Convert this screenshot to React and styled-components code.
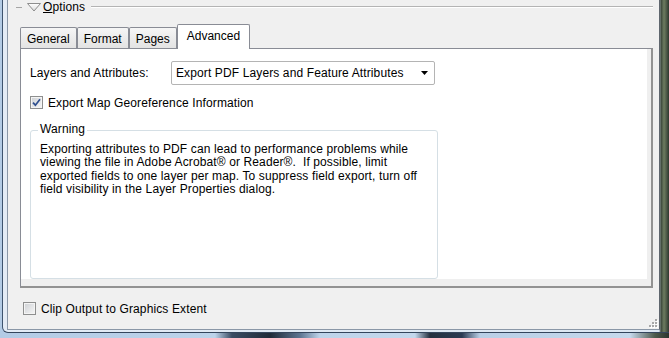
import React from 'react'
import styled, { createGlobalStyle } from 'styled-components'

const GlobalStyle = createGlobalStyle`
  html, body {
    margin: 0;
    padding: 0;
  }
  body {
    background: #b9d0e8;
    font-family: "Liberation Sans", Arial, sans-serif;
    font-size: 12px;
    letter-spacing: 0.12px;
    color: #000;
  }
`

// desktop glass seen around the dialog frame
const Screen = styled.div`
  width: 669px;
  height: 338px;
  overflow: hidden;
  box-sizing: border-box;
  padding-left: 2px;
  background: linear-gradient(90deg,
    #b3cbe5 0, #bcd3ea 215px, #3a4c63 232px, #1f2a38 270px, #5d7591 300px,
    #bed4ea 320px, #c3d7ec 415px, #24303f 430px, #2a3a52 462px, #b9cfe6 480px,
    #c6d9ec 630px, #4c5a4c 655px, #2b352e 669px);
`

const Window = styled.div`
  width: 667px;
  height: 333px;
  box-sizing: border-box;
  display: flex;
  padding: 0 9px 2px 4px;
  border-left: 1px solid #3d536e;
  border-bottom: 1px solid #34465d;
  border-bottom-left-radius: 6px;
  background: linear-gradient(90deg,
    #e3ebf5 0, #dce7f2 calc(100% - 10px), #3b473b calc(100% - 8px),
    #6d7c60 calc(100% - 5px), #2e382f 100%);
`

const Client = styled.div`
  position: relative;
  flex: 1;
  display: flex;
  flex-direction: column;
  box-sizing: border-box;
  background: #f0f0f0;
  border-left: 1px solid #8a97a7;
  border-right: 1px solid #5f666e;
  border-bottom: 1px solid #8a97a7;
`

const Header = styled.div`
  height: 14px;
  display: flex;
  align-items: center;
  padding: 0 6px 0 8px;
`

const Dash = styled.span`
  width: 6px;
  height: 1px;
  background: #a5a5a5;
  margin-right: 5px;
`

const HeaderTitle = styled.span`
  margin: 0 6px 0 2px;
  line-height: 14px;

  u {
    text-decoration: underline;
    text-underline-offset: 1px;
  }
`

const HeaderRule = styled.span`
  flex: 1;
  height: 0;
  border-top: 1px solid #b4b4b4;
  border-bottom: 1px solid #ffffff;
`

const TabStrip = styled.div`
  position: relative;
  z-index: 1;
  display: flex;
  align-items: flex-end;
  height: 24px;
  margin: 10px 0 0 12px;
  letter-spacing: 0;
`

const Tab = styled.div`
  box-sizing: border-box;
  display: flex;
  align-items: center;
  height: ${p => (p.$active ? '25px' : '21px')};
  margin-bottom: ${p => (p.$active ? '-1px' : '0')};
  padding: ${p => (p.$active ? '0 9px 2px' : '2px 6px 0')};
  border: 1px solid #898c95;
  border-bottom: none;
  border-radius: 2px 2px 0 0;
  background: ${p => (p.$active
    ? '#ffffff'
    : 'linear-gradient(#f6f6f6, #ececec 50%, #e3e3e3)')};
  white-space: nowrap;
`

const Panel = styled.div`
  box-sizing: border-box;
  height: 240px;
  margin: 0 6px 0 12px;
  display: flex;
  padding: 0 4px 7px 0;
  background: #efefef;
  border-top: 1px solid #898c95;
  border-left: 1px solid #898c95;
  border-right: 2px solid #929292;
  border-bottom: 2px solid #929292;
`

const Page = styled.div`
  flex: 1;
  display: flex;
  flex-direction: column;
  background: #ffffff;
  padding-left: 9px;
`

const FormRow = styled.div`
  display: flex;
  align-items: center;
  margin-top: 12px;
  height: 24px;
`

const Label = styled.span`
  width: 141px;
`

const Select = styled.div`
  box-sizing: border-box;
  width: 264px;
  height: 24px;
  display: flex;
  align-items: center;
  justify-content: space-between;
  padding: 0 6px 0 4px;
  border: 1px solid #b4b4b4;
  border-radius: 2px;
  background: #ffffff;
`

const CheckRow = styled.label`
  display: flex;
  align-items: center;
  gap: 5px;
  height: 13px;
  margin-top: ${p => p.$top || 0}px;
  padding-left: ${p => p.$left || 0}px;
`

const Box = styled.span`
  box-sizing: border-box;
  width: 13px;
  height: 13px;
  display: flex;
  align-items: center;
  justify-content: center;
  border: 1px solid #8e8f8f;
  box-shadow: inset 0 0 0 1px #f4f4f4;
  background: linear-gradient(135deg, #cdd0d4, #f7f7f7);
`

const GroupBox = styled.div`
  box-sizing: border-box;
  width: 408px;
  height: 149px;
  margin-top: 21px;
  padding: 0 9px;
  border: 1px solid #d5dfe5;
  border-radius: 3px;
`

const Legend = styled.div`
  width: fit-content;
  margin: -9px 0 0 -2px;
  padding: 0 2px;
  line-height: 14px;
  background: #ffffff;
`

const Message = styled.div`
  margin-top: 7px;
  line-height: 13.3px;
  white-space: nowrap;
`

const BottomRow = styled.div`
  margin-top: 14px;
`

const Grip = styled.svg`
  position: absolute;
  right: 1px;
  bottom: 1px;
`

const Checkbox = ({ checked }) => (
  <Box>
    {checked && (
      <svg width="9" height="9" viewBox="0 0 9 9">
        <path d="M1 4.6 L3.4 7.2 L8 1.2" fill="none" stroke="#2f4f8f" strokeWidth="1.7" />
      </svg>
    )}
  </Box>
)

const tabs = ['General', 'Format', 'Pages', 'Advanced']

export default function App() {
  return (
    <>
      <GlobalStyle />
      <Screen>
        <Window>
          <Client>
            <Header>
              <Dash />
              <svg width="14" height="10" viewBox="0 0 14 10">
                <defs>
                  <linearGradient id="tri" x1="0" y1="0" x2="0" y2="1">
                    <stop offset="0" stopColor="#ffffff" />
                    <stop offset="1" stopColor="#d9d9d9" />
                  </linearGradient>
                </defs>
                <path d="M0.5 1.5 L13.5 1.5 L7 9 Z" fill="url(#tri)" stroke="#8d8d8d" strokeWidth="1" />
              </svg>
              <HeaderTitle><u>O</u>ptions</HeaderTitle>
              <HeaderRule />
            </Header>

            <TabStrip>
              {tabs.map(t => (
                <Tab key={t} $active={t === 'Advanced'}>{t}</Tab>
              ))}
            </TabStrip>

            <Panel>
              <Page>
                <FormRow>
                  <Label>Layers and Attributes:</Label>
                  <Select>
                    <span>Export PDF Layers and Feature Attributes</span>
                    <svg width="7" height="4" viewBox="0 0 7 4">
                      <path d="M0 0 L7 0 L3.5 4 Z" fill="#000" />
                    </svg>
                  </Select>
                </FormRow>

                <CheckRow $top={11}>
                  <Checkbox checked />
                  <span>Export Map Georeference Information</span>
                </CheckRow>

                <GroupBox>
                  <Legend>Warning</Legend>
                  <Message>
                    <div>Exporting attributes to PDF can lead to performance problems while</div>
                    <div>viewing the file in Adobe Acrobat® or Reader®.&nbsp; If possible, limit</div>
                    <div>exported fields to one layer per map. To suppress field export, turn off</div>
                    <div>field visibility in the Layer Properties dialog.</div>
                  </Message>
                </GroupBox>
              </Page>
            </Panel>

            <BottomRow>
              <CheckRow $left={15}>
                <Checkbox />
                <span>Clip Output to Graphics Extent</span>
              </CheckRow>
            </BottomRow>

            <Grip width="10" height="10" viewBox="0 0 10 10">
              {[[7, 1], [4, 4], [7, 4], [1, 7], [4, 7], [7, 7]].map(([x, y]) => (
                <g key={`${x}-${y}`}>
                  <rect x={x + 1} y={y + 1} width="2" height="2" fill="#ffffff" />
                  <rect x={x} y={y} width="2" height="2" fill="#a8a8a8" />
                </g>
              ))}
            </Grip>
          </Client>
        </Window>
      </Screen>
    </>
  )
}
